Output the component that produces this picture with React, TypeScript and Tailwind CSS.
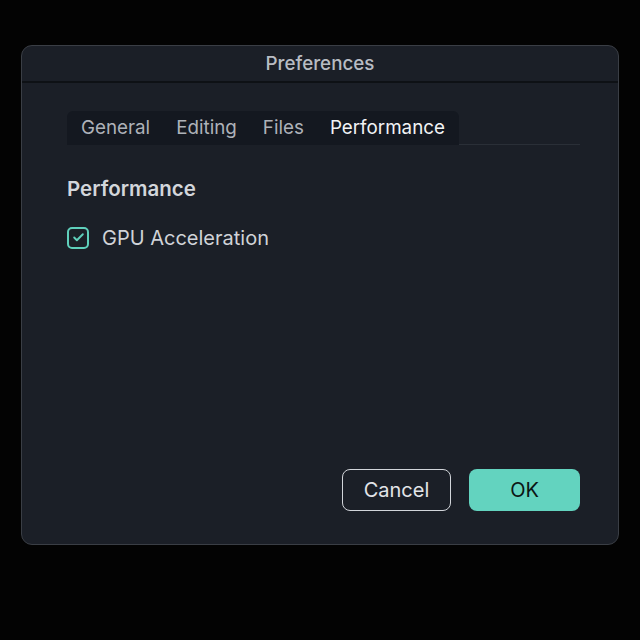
import { Check } from 'lucide-react'

const tabs = ['General', 'Editing', 'Files', 'Performance']

export default function App() {
    const active = 'Performance'

    return (
        <div
            className="w-[640px] h-[640px] bg-[#030303] pt-[45px] px-[21px]"
            style={{ fontFamily: 'Inter, "Noto Sans", sans-serif' }}
        >
            <div className="h-[500px] flex flex-col rounded-[11px] border border-[#3a3e45] bg-[#1b1f27] overflow-hidden">
                {/* title bar */}
                <div className="h-[37px] shrink-0 flex items-center justify-center pt-[1px] border-b-2 border-[#0e1115] text-[18.8px] font-medium text-[#b8bcc3]">
                    Preferences
                </div>

                <div className="flex-1 flex flex-col pl-[45px] pr-[38px] pt-[28px] pb-[33px]">
                    {/* tabs */}
                    <div className="flex items-end">
                        <div className="flex h-[34px] items-center rounded-t-[6px] bg-[#141820] px-[1px]">
                            {tabs.map((tab) => (
                                <button
                                    key={tab}
                                    className={
                                        tab === active
                                            ? 'h-full px-[13px] text-[18.8px] text-[#f2f3f5]'
                                            : 'h-full px-[13px] text-[18.8px] text-[#aeb2b9]'
                                    }
                                >
                                    {tab}
                                </button>
                            ))}
                        </div>
                        <div className="flex-1 border-b border-[#2a2f37]"></div>
                    </div>

                    <h2 className="mt-[29px] text-[20.5px] font-semibold text-[#d3d6db]">
                        Performance
                    </h2>

                    <label className="mt-[18px] flex items-center gap-[13px]">
                        <span className="w-[22px] h-[22px] flex items-center justify-center rounded-[5px] border-2 border-[#5fcfbb]">
                            <Check className="w-[13px] h-[13px] text-[#5fcfbb]" strokeWidth={3.5} />
                        </span>
                        <span className="text-[20px] text-[#d0d3d8]">GPU Acceleration</span>
                    </label>

                    <div className="mt-auto flex justify-end gap-[18px]">
                        <button className="w-[109px] h-[42px] rounded-[8px] border-[1.5px] border-[#d2d5da] text-[20px] text-[#e2e4e8]">
                            Cancel
                        </button>
                        <button className="w-[111px] h-[42px] rounded-[8px] bg-[#63d3bf] text-[20px] text-[#0c1614]">
                            OK
                        </button>
                    </div>
                </div>
            </div>
        </div>
    )
}
